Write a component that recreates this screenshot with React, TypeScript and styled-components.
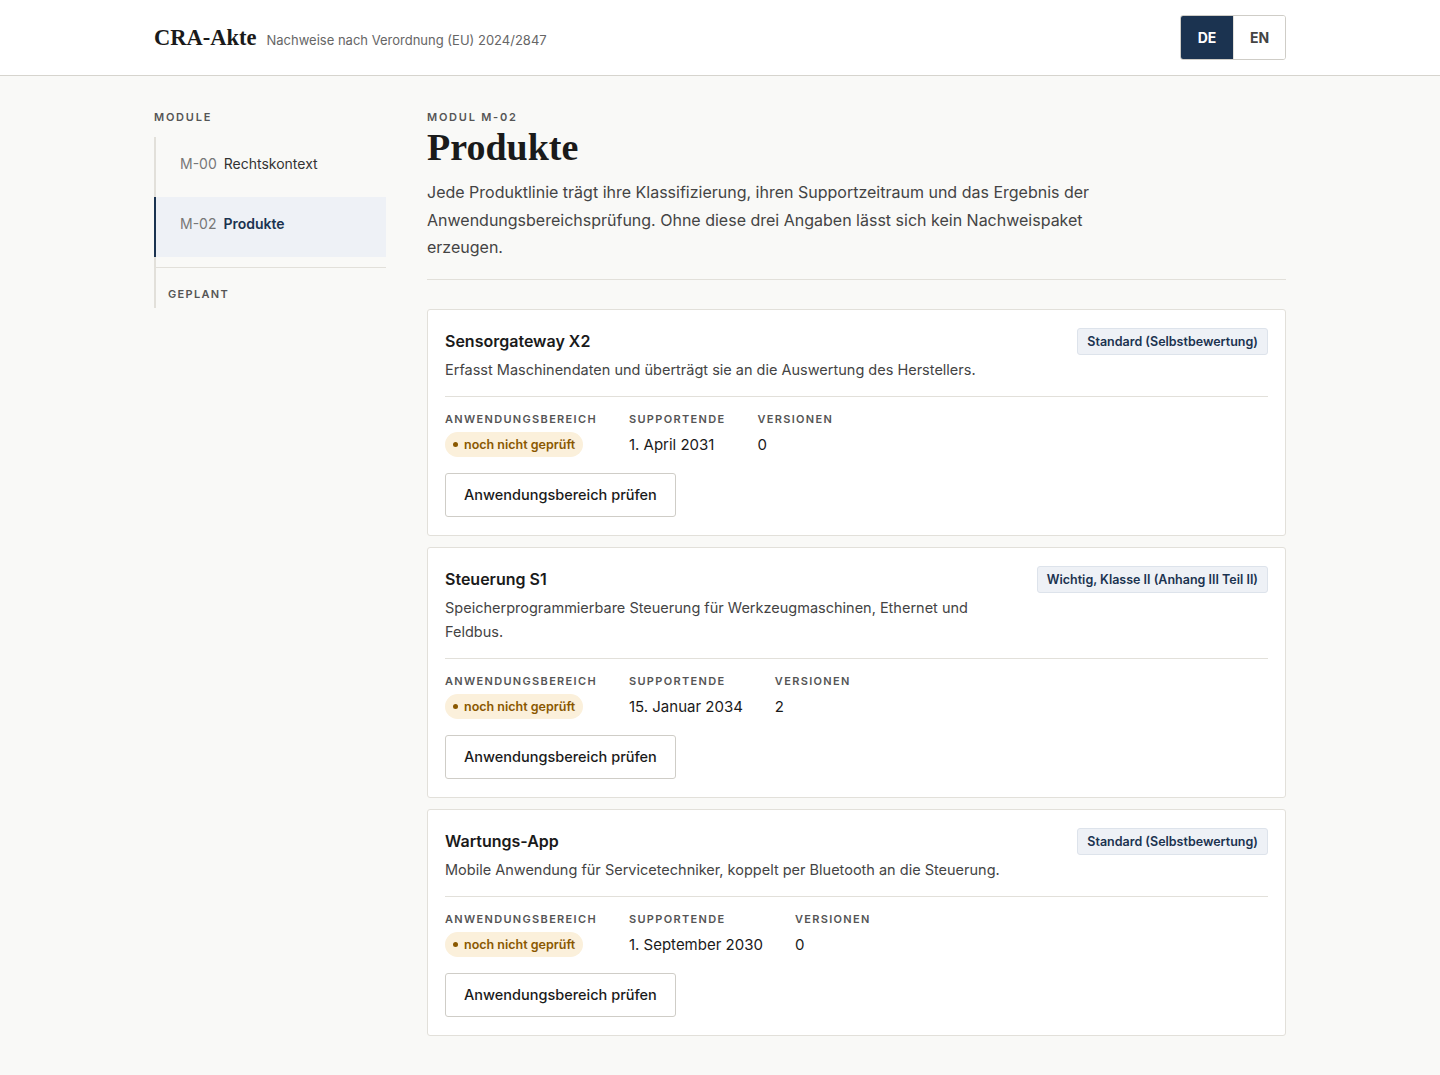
import React from "react";
import styled, { createGlobalStyle } from "styled-components";

const GlobalStyle = createGlobalStyle`
  html, body { margin: 0; padding: 0; }
  body {
    background: #f9f9f7;
    font-family: Inter, "Noto Sans", sans-serif;
    color: #1a1a1a;
    -webkit-font-smoothing: antialiased;
  }
  * { box-sizing: border-box; }
`;

const NAVY = "#1b3350";

const Header = styled.header`
  background: #ffffff;
  border-bottom: 1px solid #d6d4ce;
`;

const HeaderInner = styled.div`
  max-width: 1132px;
  margin: 0 auto;
  padding: 15px 0;
  display: flex;
  align-items: center;
  justify-content: space-between;
`;

const Brand = styled.div`
  display: flex;
  align-items: baseline;
  gap: 10px;
`;

const Logo = styled.span`
  font-family: "Liberation Serif", serif;
  font-weight: 700;
  font-size: 22.5px;
  color: #1a1a1a;
`;

const Tagline = styled.span`
  font-size: 13px;
  color: #666;
`;

const LangToggle = styled.div`
  display: flex;
  border: 1px solid #cfcdc7;
  border-radius: 3px;
  overflow: hidden;
  height: 45px;
`;

const LangButton = styled.button<{ $active?: boolean }>`
  width: 52px;
  border: none;
  font-family: Inter, sans-serif;
  font-size: 14px;
  font-weight: 700;
  cursor: pointer;
  background: ${(p) => (p.$active ? NAVY : "#fff")};
  color: ${(p) => (p.$active ? "#fff" : "#444")};
  & + & { border-left: 1px solid #e2e0da; }
`;

const Layout = styled.div`
  max-width: 1132px;
  margin: 0 auto;
  padding: 34px 0 40px;
  display: grid;
  grid-template-columns: 232px 1fr;
  gap: 41px;
`;

const Eyebrow = styled.div<{ $tight?: boolean }>`
  font-size: 11px;
  line-height: 14px;
  font-weight: 600;
  letter-spacing: ${(p) => (p.$tight ? "0.12em" : "0.16em")};
  text-transform: uppercase;
  color: #555;
`;

const Sidebar = styled.aside``;

const Nav = styled.nav`
  margin-top: 13px;
  border-left: 2px solid #e2e0da;
`;

const NavItem = styled.a<{ $active?: boolean }>`
  display: flex;
  gap: 7px;
  padding: 17px 24px 23px;
  margin-left: -2px;
  border-left: 2px solid ${(p) => (p.$active ? NAVY : "transparent")};
  background: ${(p) => (p.$active ? "#eef1f6" : "transparent")};
  font-size: 14px;
  line-height: 20px;
  text-decoration: none;
  color: ${(p) => (p.$active ? NAVY : "#333")};
  font-weight: ${(p) => (p.$active ? 600 : 400)};
`;

const NavCode = styled.span`
  color: #777;
  font-weight: 400;
`;

const NavDivider = styled.div`
  margin-top: 10px;
  border-top: 1px solid #e2e0da;
  padding: 19px 12px 7px;
`;

const Main = styled.main``;

const PageHead = styled.div`
  padding-bottom: 17px;
  border-bottom: 1px solid #e2e0da;
`;

const Title = styled.h1`
  margin: 2px 0 11px;
  font-family: "Liberation Serif", serif;
  font-weight: 700;
  font-size: 38px;
  line-height: 42px;
  color: #1a1a1a;
`;

const Lead = styled.p`
  margin: 0;
  max-width: 680px;
  font-size: 16px;
  line-height: 27.5px;
  color: #444;
`;

const CardList = styled.div`
  margin-top: 29px;
  display: flex;
  flex-direction: column;
  gap: 11px;
`;

const Card = styled.section`
  background: #fff;
  border: 1px solid #e2e0da;
  border-radius: 3px;
  padding: 18px 17px 18px;
`;

const CardTop = styled.div`
  display: flex;
  justify-content: space-between;
  align-items: flex-start;
  gap: 24px;
  padding-bottom: 14px;
  border-bottom: 1px solid #e2e0da;
`;

const CardText = styled.div`
  flex: 1;
  min-width: 0;
`;

const CardTitle = styled.h2`
  margin: 0;
  font-size: 16px;
  line-height: 26px;
  font-weight: 600;
  color: #1a1a1a;
`;

const CardDesc = styled.p`
  margin: 4px 0 0;
  max-width: 566px;
  font-size: 14.5px;
  line-height: 24px;
  color: #444;
`;

const ClassTag = styled.span`
  flex-shrink: 0;
  display: inline-flex;
  align-items: center;
  height: 27px;
  padding: 0 9px;
  background: #eef1f6;
  border: 1px solid #dde3eb;
  border-radius: 3px;
  font-size: 12.5px;
  font-weight: 600;
  color: ${NAVY};
`;

const Meta = styled.div`
  display: flex;
  gap: 32px;
  padding-top: 15px;
`;

const MetaCol = styled.div`
  display: flex;
  flex-direction: column;
  gap: 6px;
`;

const MetaValue = styled.div`
  height: 25px;
  display: flex;
  align-items: center;
  font-size: 15px;
  color: #1a1a1a;
`;

const StatusPill = styled.span`
  display: inline-flex;
  align-items: center;
  gap: 6px;
  height: 25px;
  padding: 0 8px;
  border-radius: 13px;
  background: #fbf0db;
  color: #8a5800;
  font-size: 12.5px;
  font-weight: 600;
`;

const Dot = styled.span`
  width: 5px;
  height: 5px;
  border-radius: 50%;
  background: #8a5800;
`;

const ActionButton = styled.button`
  margin-top: 16px;
  height: 44px;
  padding: 0 18px;
  background: #fff;
  border: 1px solid #cfcdc7;
  border-radius: 3px;
  font-family: Inter, sans-serif;
  font-size: 14.5px;
  font-weight: 500;
  color: #1a1a1a;
  cursor: pointer;
`;

type Product = {
  name: string;
  desc: string;
  cls: string;
  support: string;
  versions: number;
};

const products: Product[] = [
  {
    name: "Sensorgateway X2",
    desc: "Erfasst Maschinendaten und überträgt sie an die Auswertung des Herstellers.",
    cls: "Standard (Selbstbewertung)",
    support: "1. April 2031",
    versions: 0,
  },
  {
    name: "Steuerung S1",
    desc: "Speicherprogrammierbare Steuerung für Werkzeugmaschinen, Ethernet und Feldbus.",
    cls: "Wichtig, Klasse II (Anhang III Teil II)",
    support: "15. Januar 2034",
    versions: 2,
  },
  {
    name: "Wartungs-App",
    desc: "Mobile Anwendung für Servicetechniker, koppelt per Bluetooth an die Steuerung.",
    cls: "Standard (Selbstbewertung)",
    support: "1. September 2030",
    versions: 0,
  },
];

function ProductCard({ p }: { p: Product }) {
  return (
    <Card>
      <CardTop>
        <CardText>
          <CardTitle>{p.name}</CardTitle>
          <CardDesc>{p.desc}</CardDesc>
        </CardText>
        <ClassTag>{p.cls}</ClassTag>
      </CardTop>
      <Meta>
        <MetaCol>
          <Eyebrow $tight>Anwendungsbereich</Eyebrow>
          <MetaValue>
            <StatusPill>
              <Dot />
              noch nicht geprüft
            </StatusPill>
          </MetaValue>
        </MetaCol>
        <MetaCol>
          <Eyebrow $tight>Supportende</Eyebrow>
          <MetaValue>{p.support}</MetaValue>
        </MetaCol>
        <MetaCol>
          <Eyebrow $tight>Versionen</Eyebrow>
          <MetaValue>{p.versions}</MetaValue>
        </MetaCol>
      </Meta>
      <ActionButton>Anwendungsbereich prüfen</ActionButton>
    </Card>
  );
}

export default function App() {
  return (
    <>
      <GlobalStyle />
      <Header>
        <HeaderInner>
          <Brand>
            <Logo>CRA-Akte</Logo>
            <Tagline>Nachweise nach Verordnung (EU) 2024/2847</Tagline>
          </Brand>
          <LangToggle>
            <LangButton $active>DE</LangButton>
            <LangButton>EN</LangButton>
          </LangToggle>
        </HeaderInner>
      </Header>
      <Layout>
        <Sidebar>
          <Eyebrow>Module</Eyebrow>
          <Nav>
            <NavItem href="#">
              <NavCode>M-00</NavCode>
              <span>Rechtskontext</span>
            </NavItem>
            <NavItem href="#" $active>
              <NavCode>M-02</NavCode>
              <span>Produkte</span>
            </NavItem>
            <NavDivider>
              <Eyebrow $tight>Geplant</Eyebrow>
            </NavDivider>
          </Nav>
        </Sidebar>
        <Main>
          <PageHead>
            <Eyebrow>Modul M-02</Eyebrow>
            <Title>Produkte</Title>
            <Lead>
              Jede Produktlinie trägt ihre Klassifizierung, ihren Supportzeitraum und das Ergebnis der
              Anwendungsbereichsprüfung. Ohne diese drei Angaben lässt sich kein Nachweispaket
              erzeugen.
            </Lead>
          </PageHead>
          <CardList>
            {products.map((p) => (
              <ProductCard key={p.name} p={p} />
            ))}
          </CardList>
        </Main>
      </Layout>
    </>
  );
}
